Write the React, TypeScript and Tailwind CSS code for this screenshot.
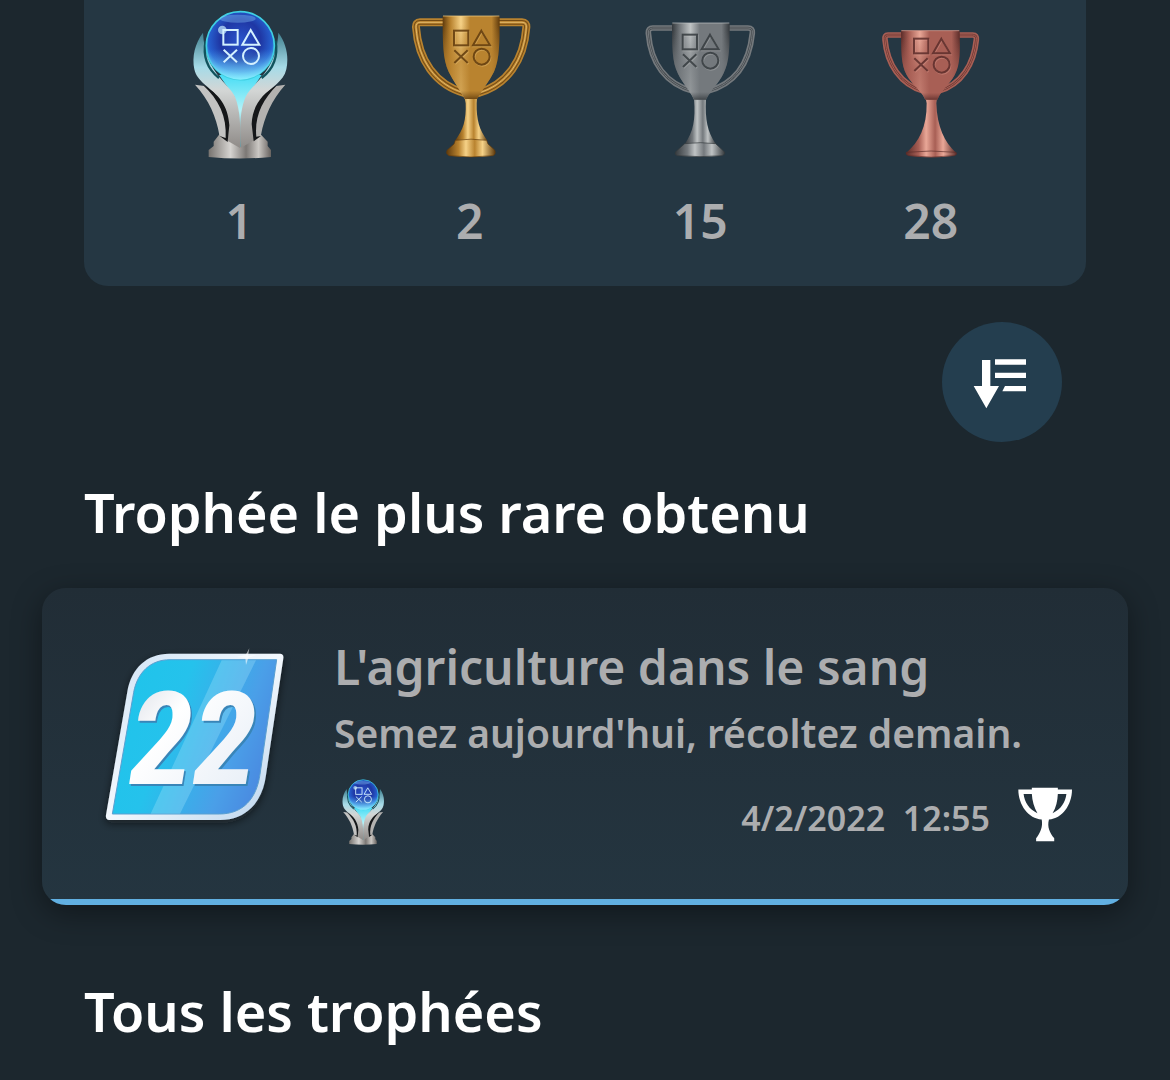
import { useId } from "react";

interface Cup {
    name: string;
    count: number;
    light: string;
    mid: string;
    dark: string;
    viewBox: string;
    size: string;
    bowl: string;
    rim: string;
    handles: string;
    handleWidth: number;
    stem: string;
    base: string;
    symbols: string;
}

const cups: Cup[] = [
    {
        name: "Or",
        count: 2,
        light: "#f6d287",
        mid: "#b9832f",
        dark: "#5f3a0c",
        viewBox: "0 0 420 510",
        size: "w-[140px] h-[170px]",
        bowl: "M128 48 C128 125 128 178 146 215 C160 244 180 268 194 297 H231 C246 268 268 244 282 215 C299 178 299 125 299 48 Z",
        rim: "M129 48 H298",
        handles:
            "M134 67 H60 Q47 67 48 82 C55 180 105 255 196 280 M293 67 H366 Q380 67 379 82 C372 180 322 255 232 280",
        handleWidth: 24,
        stem: "M194 295 H231 L230 310 C229 360 238 390 262 422 H165 C190 390 199 360 197 310 Z",
        base: "M166 421 Q213 414 260 421 L264 432 L284 450 Q289 462 279 467 Q213 475 147 467 Q136 462 141 451 L162 432 Z",
        symbols: "translate(160 88)",
    },
    {
        name: "Argent",
        count: 15,
        light: "#bfc3c4",
        mid: "#74797d",
        dark: "#34393d",
        viewBox: "0 0 420 510",
        size: "w-[140px] h-[170px]",
        bowl: "M126 69 C126 140 126 186 144 221 C158 250 180 270 192 299 H228 C242 270 266 250 280 221 C299 186 299 140 299 69 Z",
        rim: "M127 69 H298",
        handles:
            "M132 84 H68 Q54 84 55 99 C62 190 108 252 190 274 M293 84 H354 Q369 84 367 99 C358 190 314 252 232 274",
        handleWidth: 17,
        stem: "M192 297 H228 C225 360 232 395 258 433 H164 C190 395 197 360 192 297 Z",
        base: "M164 431 Q211 425 257 431 L283 455 Q288 463 276 467 Q211 473 142 467 Q131 463 137 455 Z",
        symbols: "translate(156 100)",
    },
    {
        name: "Bronze",
        count: 28,
        light: "#e9a797",
        mid: "#a85f55",
        dark: "#5b2c29",
        viewBox: "0 0 390 510",
        size: "w-[130px] h-[170px]",
        bowl: "M105 92 C106 150 104 192 122 225 C138 254 166 270 178 299 H214 C226 270 250 254 266 225 C284 192 282 150 281 92 Z",
        rim: "M106 92 H280",
        handles:
            "M112 105 H66 Q55 105 57 119 C63 190 102 254 174 274 M276 105 H320 Q333 105 331 119 C324 190 288 254 216 274",
        handleWidth: 17,
        stem: "M179 294 H213 L211 310 C213 380 236 428 270 458 H121 C158 428 183 380 182 310 Z",
        base: "M121 457 Q195 449 270 457 Q275 464 265 467 Q195 476 128 467 Q117 464 121 457 Z",
        symbols: "translate(142 112)",
    },
];

const Shapes = () => (
    <>
        <rect x="2" y="4" width="43" height="44" />
        <path d="M84 4 L110 48 H59 Z" />
        <path d="M3 63 L43 101 M43 63 L3 101" />
        <circle cx="85" cy="82" r="24" />
    </>
);

const CupTrophy = ({ cup }: { cup: Cup }) => {
    const id = useId();
    return (
        <svg viewBox={cup.viewBox} className={cup.size} role="img" aria-label={cup.name}>
            <defs>
                <linearGradient id={`${id}b`}>
                    <stop offset="0" stopColor={cup.dark} />
                    <stop offset="0.14" stopColor={cup.mid} />
                    <stop offset="0.32" stopColor={cup.light} />
                    <stop offset="0.48" stopColor={cup.mid} />
                    <stop offset="0.86" stopColor={cup.mid} />
                    <stop offset="1" stopColor={cup.dark} />
                </linearGradient>
                <linearGradient id={`${id}s`}>
                    <stop offset="0" stopColor={cup.dark} />
                    <stop offset="0.25" stopColor={cup.mid} />
                    <stop offset="0.4" stopColor={cup.light} />
                    <stop offset="0.58" stopColor={cup.mid} />
                    <stop offset="0.74" stopColor={cup.light} />
                    <stop offset="1" stopColor={cup.dark} />
                </linearGradient>
                <linearGradient id={`${id}v`} x2="0" y2="1">
                    <stop offset="0.1" stopColor={cup.mid} stopOpacity="0" />
                    <stop offset="0.55" stopColor={cup.mid} stopOpacity="0.75" />
                    <stop offset="0.9" stopColor={cup.mid} stopOpacity="0.6" />
                    <stop offset="1" stopColor={cup.dark} stopOpacity="0.8" />
                </linearGradient>
            </defs>
            <g fill="none" strokeLinejoin="round">
                <path d={cup.handles} stroke={cup.mid} strokeWidth={cup.handleWidth} />
                <path d={cup.handles} stroke={cup.dark} strokeWidth={cup.handleWidth - 10} strokeOpacity="0.75" />
                <path d={cup.handles} stroke={cup.mid} strokeWidth={cup.handleWidth > 20 ? 8 : 3} />
                {cup.handleWidth > 20 && <path d={cup.handles} stroke={cup.light} strokeWidth="2" />}
            </g>
            <path d={cup.stem} fill={`url(#${id}s)`} />
            <path d={cup.base} fill={`url(#${id}s)`} stroke={cup.dark} strokeWidth="2" />
            <path d={cup.bowl} fill={`url(#${id}b)`} />
            <path d={cup.bowl} fill={`url(#${id}v)`} />
            <path d={cup.rim} stroke={cup.light} strokeWidth="3" strokeOpacity="0.7" />
            <g transform={cup.symbols} fill="none" strokeWidth="6">
                <g stroke={cup.light} strokeOpacity="0.35" transform="translate(2 3)">
                    <Shapes />
                </g>
                <g stroke={cup.dark} strokeOpacity="0.85">
                    <Shapes />
                </g>
            </g>
        </svg>
    );
};

const PlatinumTrophy = ({ viewBox, className }: { viewBox: string; className: string }) => {
    const id = useId();
    return (
        <svg viewBox={viewBox} className={className} role="img" aria-label="Platine">
            <defs>
                <radialGradient id={`${id}o`} cx="0.5" cy="0.42" r="0.6">
                    <stop offset="0" stopColor="#2a55cc" />
                    <stop offset="0.5" stopColor="#1f37a4" />
                    <stop offset="0.78" stopColor="#2660d0" />
                    <stop offset="1" stopColor="#5cd2f6" />
                </radialGradient>
                <linearGradient id={`${id}g`} x2="0" y2="1">
                    <stop offset="0.55" stopColor="#58b8f5" stopOpacity="0" />
                    <stop offset="1" stopColor="#8cf0ff" stopOpacity="0.95" />
                </linearGradient>
                <linearGradient id={`${id}w`} x2="0" y2="1">
                    <stop offset="0" stopColor="#3f7f8e" />
                    <stop offset="0.3" stopColor="#a6dbe8" />
                    <stop offset="0.5" stopColor="#d3d6d5" />
                    <stop offset="1" stopColor="#8f8b88" />
                </linearGradient>
                <linearGradient id={`${id}b`}>
                    <stop offset="0" stopColor="#77736f" />
                    <stop offset="0.35" stopColor="#d6d4d1" />
                    <stop offset="0.6" stopColor="#7c7875" />
                    <stop offset="0.8" stopColor="#cbc8c4" />
                    <stop offset="1" stopColor="#67625f" />
                </linearGradient>
                <linearGradient id={`${id}l`} x2="0" y2="1">
                    <stop offset="0" stopColor="#48ddf5" />
                    <stop offset="0.5" stopColor="#b6f3f8" />
                    <stop offset="1" stopColor="#4da2b3" />
                </linearGradient>
            </defs>
            <path d="M104 425 L122 402 H244 L266 425 V438 L276 450 V471 Q183 480 89 471 V450 L104 438 Z" fill={`url(#${id}b)`} />
            <path d="M120 225 H248 L205 290 L188 440 H178 L166 290 Z" fill={`url(#${id}l)`} />
            <path d="M72 98 C48 130 38 170 46 208 C54 246 96 262 116 292 C132 320 130 370 148 424 L183 444 C186 390 184 330 168 290 C150 250 78 218 72 98 Z" fill={`url(#${id}w)`} />
            <path d="M298 98 C322 130 330 170 322 208 C314 246 276 260 254 292 C238 320 244 370 226 420 L185 444 C182 390 182 330 200 290 C218 250 292 218 298 98 Z" fill={`url(#${id}w)`} />
            <path d="M48 254 L76 258 C112 284 142 322 150 382 L146 424 L121 405 C112 350 90 300 48 254 Z" fill="#c3c3c2" />
            <path d="M319 254 L292 258 C256 282 228 322 222 382 L226 424 L246 405 C256 350 278 300 319 254 Z" fill="#b3b2b0" />
            <path d="M72 255 C118 280 148 318 151 376 L146 426 L122 408 L140 414 C144 350 120 300 72 255 Z" fill="#151719" />
            <path d="M294 256 C250 280 220 318 218 372 L224 424 L246 408 L232 410 C226 350 250 300 294 256 Z" fill="#151719" />
            <path d="M80 122 C70 172 90 210 120 234" stroke="#11535d" strokeWidth="7" fill="none" />
            <path d="M290 122 C298 172 280 210 248 234" stroke="#11535d" strokeWidth="7" fill="none" />
            <circle cx="184" cy="137" r="102" fill={`url(#${id}o)`} stroke="#3fcfe2" strokeWidth="5" />
            <circle cx="184" cy="137" r="102" fill={`url(#${id}g)`} />
            <ellipse cx="176" cy="56" rx="54" ry="12" fill="#8fd2ff" fillOpacity="0.35" />
            <circle cx="130" cy="90" r="13" fill="#c8eeff" fillOpacity="0.7" />
            <g transform="translate(131 86)" fill="none" stroke="#d4f1ff" strokeWidth="6">
                <Shapes />
            </g>
        </svg>
    );
};

const SortIcon = () => (
    <svg viewBox="36 36 360 360" className="size-full" fill="#fff" aria-hidden="true">
        <path d="M156 150 H181 V228 H207 L169 295 L131 228 H156 Z" />
        <path d="M195 148 H288 V164 H195 Z M195 188 H288 V204 H195 Z M225 228 H288 V244 H217 Z" />
    </svg>
);

const GameBadge = () => (
    <svg viewBox="0 0 630 600" className="w-[210px] h-[200px] shrink-0" role="img" aria-label="22">
        <defs>
            <linearGradient id="badge-fill" x1="0" y1="0.3" x2="1" y2="0.65">
                <stop offset="0" stopColor="#1fc4ea" />
                <stop offset="0.35" stopColor="#25c2ec" />
                <stop offset="0.75" stopColor="#4a9fe8" />
                <stop offset="1" stopColor="#4a86df" />
            </linearGradient>
            <linearGradient id="badge-edge" x2="1" y2="1">
                <stop offset="0" stopColor="#cfe2f4" />
                <stop offset="0.5" stopColor="#f3f8fd" />
                <stop offset="1" stopColor="#b9d3ec" />
            </linearGradient>
            <linearGradient id="badge-digits" x2="1" y2="1">
                <stop offset="0" stopColor="#d3d8e2" />
                <stop offset="0.35" stopColor="#ffffff" />
                <stop offset="1" stopColor="#e3ebf5" />
            </linearGradient>
            <filter id="badge-shadow" x="-20%" y="-20%" width="140%" height="140%">
                <feDropShadow dx="0" dy="10" stdDeviation="12" floodColor="#0b1218" floodOpacity="0.6" />
            </filter>
        </defs>
        <path
            d="M238 56 H570 Q582 57 580 70 L528 420 C518 500 470 555 390 555 H58 Q46 554 48 540 L112 170 C124 100 170 56 238 56 Z"
            fill="url(#badge-edge)"
            filter="url(#badge-shadow)"
        />
        <path
            d="M240 74 H560 L510 418 C500 490 460 537 388 537 H67 L131 172 C142 112 182 74 240 74 Z"
            fill="url(#badge-fill)"
            stroke="#5a9fd0"
            strokeWidth="3"
        />
        <path d="M395 76 H498 L270 536 H182 Z" fill="#b5ecfa" fillOpacity="0.28" />
        <path d="M478 40 L474 62 L500 60 L475 68 L468 90 L466 68 L440 66 L467 60 Z" fill="#fff" fillOpacity="0.6" />
        <g
            fontFamily="'Roboto Condensed', 'Open Sans Condensed', Roboto, sans-serif"
            fontWeight="700"
            fontStyle="italic"
            fontSize="390"
            textAnchor="middle"
        >
            <text x="314" y="452" fill="#3985b8">22</text>
            <text x="309" y="447" fill="url(#badge-digits)">22</text>
        </g>
    </svg>
);

const EarnedIcon = () => (
    <svg viewBox="50 52 164 166" className="w-[54px] h-[55px]" fill="#fff" role="img" aria-label="Obtenu">
        <path
            fillRule="evenodd"
            d="M92 54 H171 V59 H214 C214 106 184 148 144 150 C138 172 146 190 160 207 V216 H105 V207 C118 190 126 172 122 150 C82 148 51 106 51 59 H92 Z M67 73 C70 98 84 120 109 131 C99 114 93 94 92 73 Z M197 73 H171 C170 94 166 114 155 131 C180 120 194 98 197 73 Z"
        />
    </svg>
);

const SectionTitle = ({ children }: { children: string }) => (
    <h2 className="mx-[84px] text-[54px] leading-[72px] font-semibold text-white">{children}</h2>
);

export default function App() {
    return (
        <main className="min-h-screen bg-[#1c272e] font-['Noto_Sans',sans-serif] text-[#acadaf]">
            <section className="mx-[84px] grid grid-cols-4 rounded-b-3xl bg-[#253743] px-10 pb-[34px]">
                <div className="flex flex-col items-center">
                    <PlatinumTrophy viewBox="0 0 360 510" className="w-[120px] h-[170px]" />
                    <p className="mt-5 text-5xl/[62px] font-semibold">1</p>
                </div>
                {cups.map((cup) => (
                    <div key={cup.name} className="flex flex-col items-center">
                        <CupTrophy cup={cup} />
                        <p className="mt-5 text-5xl/[62px] font-semibold">{cup.count}</p>
                    </div>
                ))}
            </section>

            <div className="mt-9 mr-[108px] flex justify-end">
                <button type="button" aria-label="Trier" className="size-[120px] rounded-full bg-[#243e4f]">
                    <SortIcon />
                </button>
            </div>

            <div className="pt-[34px]">
                <SectionTitle>Trophée le plus rare obtenu</SectionTitle>
            </div>

            <article className="mx-[42px] mt-10 overflow-hidden rounded-3xl bg-linear-to-b from-[#212d36] to-[#243540] shadow-[0_8px_30px_rgba(0,0,0,0.4)]">
                <div className="flex gap-[34px] pt-[47px] pr-14 pb-[54px] pl-12">
                    <GameBadge />
                    <div className="min-w-0 flex-1">
                        <h3 className="text-[48px] leading-[64px] font-semibold">L'agriculture dans le sang</h3>
                        <p className="text-[39px] leading-[68px] font-semibold">Semez aujourd'hui, récoltez demain.</p>
                        <div className="mt-3 flex items-center justify-between pl-2">
                            <PlatinumTrophy viewBox="40 30 285 448" className="w-[42px] h-[66px]" />
                            <div className="flex items-end gap-7 pt-1">
                                <time className="text-[34px] leading-[48px] font-semibold whitespace-pre">4/2/2022  12:55</time>
                                <EarnedIcon />
                            </div>
                        </div>
                    </div>
                </div>
                <div className="h-1.5 bg-[#61b0e2]" />
            </article>

            <div className="pt-[70px]">
                <SectionTitle>Tous les trophées</SectionTitle>
            </div>
        </main>
    );
}
